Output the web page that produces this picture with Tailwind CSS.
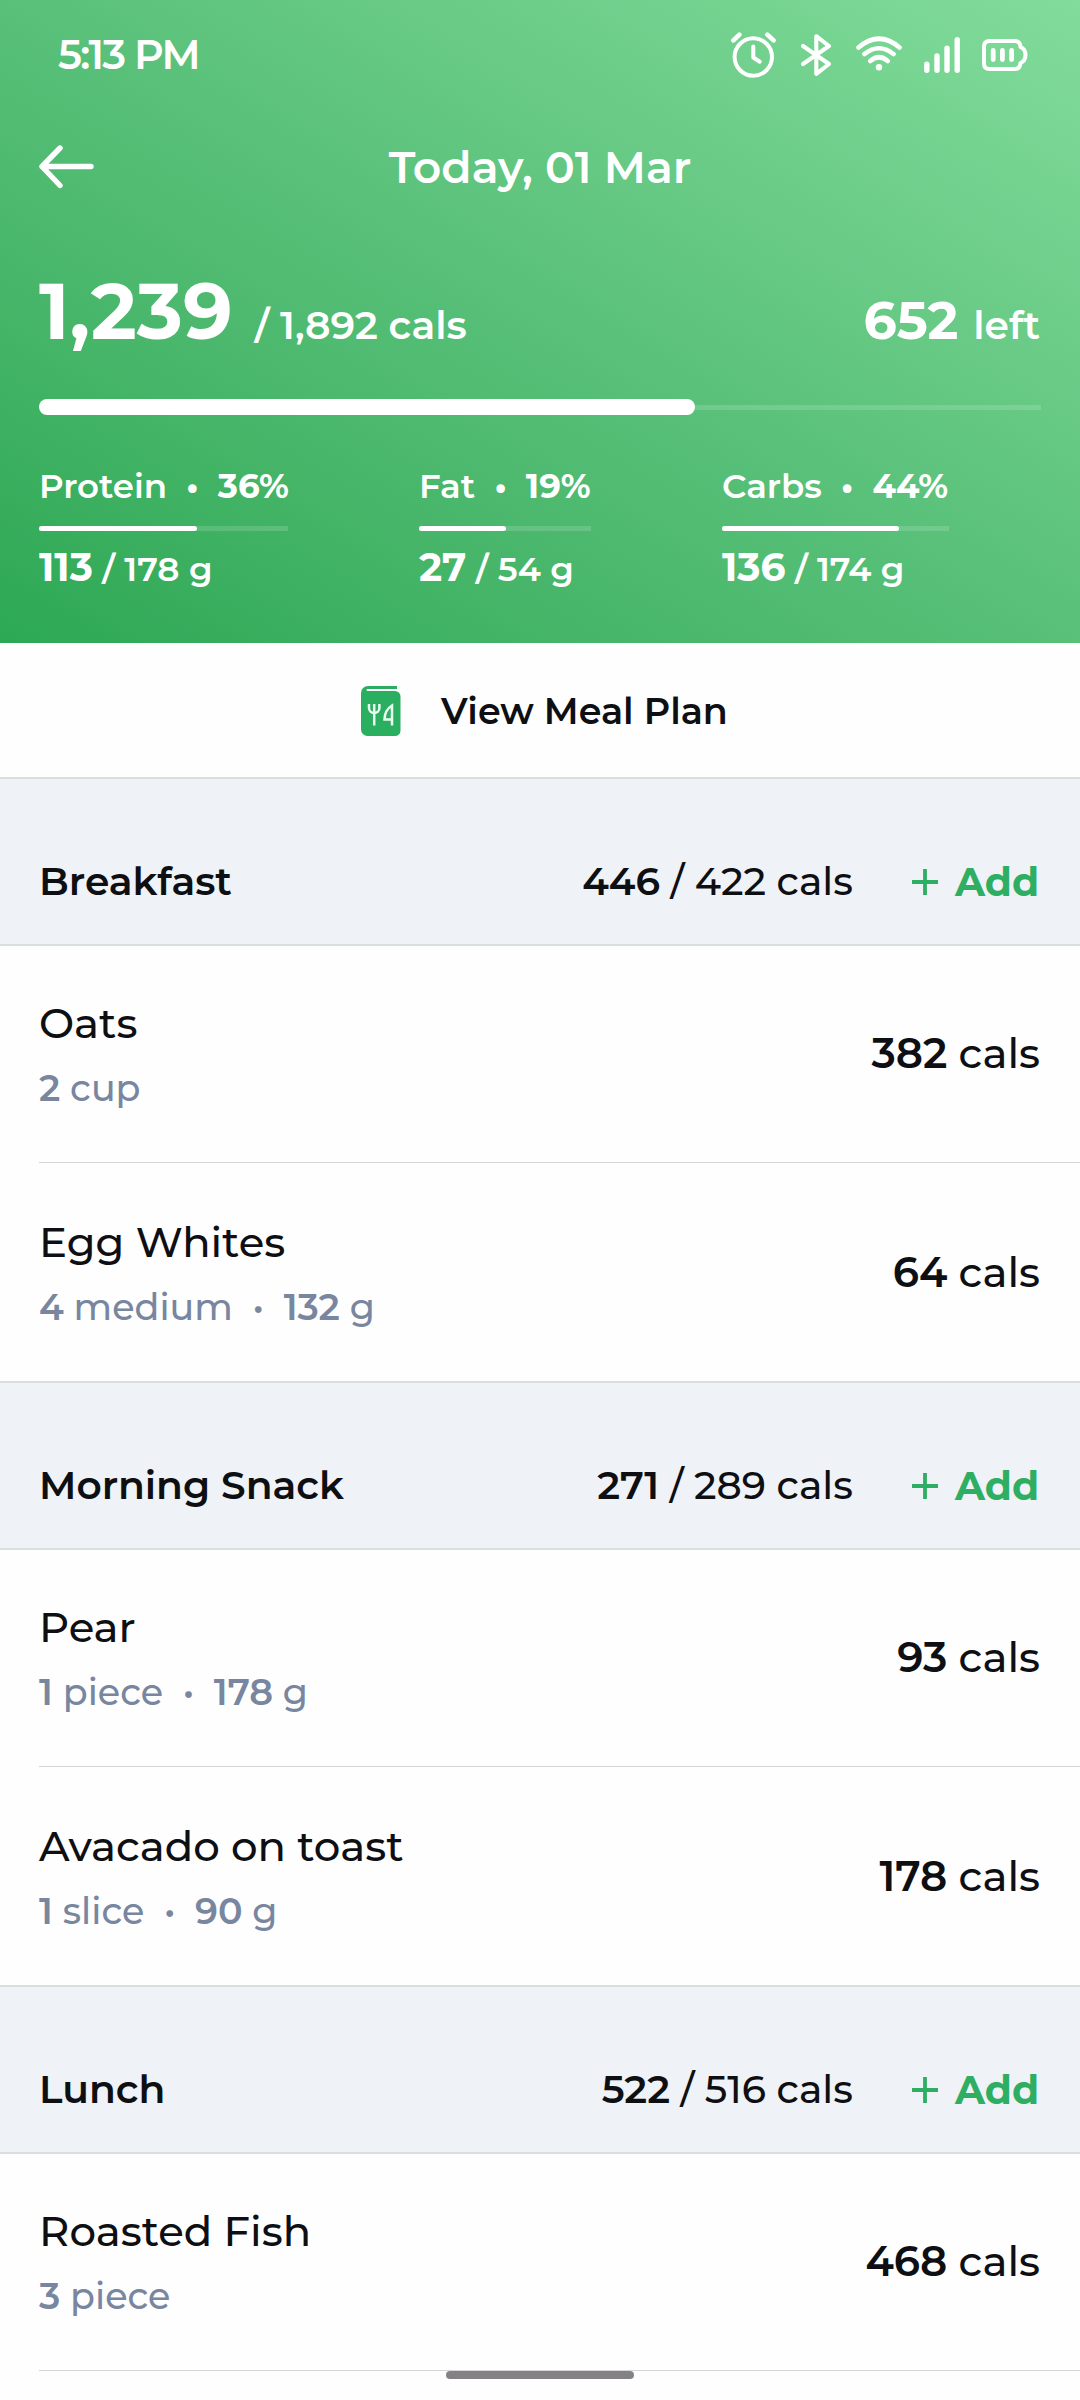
<!DOCTYPE html>
<html lang="en">
<head>
  <meta charset="UTF-8">
  <meta name="viewport" content="width=device-width, initial-scale=1.0">
  <title>Calorie Tracker - Today</title>
  <script src="https://cdn.jsdelivr.net/npm/@tailwindcss/browser@4"></script>
</head>
<body class="relative w-[1080px] h-[2400px] overflow-hidden bg-[#fefefe] font-['Montserrat','Inter',sans-serif] text-[#0e0f12]">

  <!-- Header with gradient -->
  <header class="h-[643px] bg-linear-to-tr from-[#2ca854] via-[#58c079] to-[#82dc9b] text-white">

    <!-- Status bar -->
    <div class="flex h-[109px] items-center justify-between pl-[58px] pr-[52px]">
      <span class="text-[41px] leading-none font-semibold tracking-[-1.75px]">5:13 PM</span>
      <div class="flex items-center">
        <!-- Alarm -->
        <svg class="w-[45px] h-[46px]" viewBox="0 0 45 46" fill="none" stroke="currentColor" stroke-width="4" stroke-linecap="round" stroke-linejoin="round">
          <circle cx="22.3" cy="25" r="18.7"/>
          <path d="M22.3 14.5v11l6.5 4.2"/>
          <path d="M2.4 8.4 8.4 2.6M36.4 2.6l6.2 5.8" stroke-width="4.6"/>
        </svg>
        <!-- Bluetooth -->
        <svg class="ml-[25px] w-[30px] h-[42px]" viewBox="0 0 30 42" fill="none" stroke="currentColor" stroke-width="4.1" stroke-linecap="round" stroke-linejoin="round">
          <path d="M2 12l26 18-12.7 9.8V2.2L28 12 2 30"/>
        </svg>
        <!-- Wifi -->
        <svg class="ml-[25px] w-[46px] h-[37px]" viewBox="0 0 46 37" fill="none" stroke="currentColor" stroke-width="4.6" stroke-linecap="round">
          <path d="M2.5 11.5Q23-6 43.5 11.5M8.5 18Q23 6.5 37.5 18M14.3 25Q23 17.5 31.7 25"/>
          <circle cx="23" cy="31.3" r="3.2" fill="currentColor" stroke="none"/>
        </svg>
        <!-- Signal -->
        <svg class="ml-[22px] w-[36px] h-[36px]" viewBox="0 0 36 36" fill="none" stroke="currentColor" stroke-width="5.4" stroke-linecap="round">
          <path d="M2.8 27.2v6M13 19v14.2M23 11.3v21.9M33.2 2.8v30.4"/>
        </svg>
        <!-- Battery -->
        <svg class="ml-[22px] w-[46px] h-[32px]" viewBox="0 0 46 32" fill="none" stroke="currentColor" stroke-linecap="round" stroke-linejoin="round">
          <path d="M7.5 2H33q5 0 5.500 6 5 2 5 8t-5 8q-.5 6-5.5 6H7.5Q2 30 2 24.5v-17Q2 2 7.5 2Z" stroke-width="4"/>
          <path d="M11.2 11.500v9M20.4 11.500v9M29.6 11.500v9" stroke-width="4.8"/>
        </svg>
      </div>
    </div>

    <!-- Title bar -->
    <div class="flex h-[116px] items-center justify-between px-[39px]">
      <svg class="w-[55px] h-[44px]" viewBox="0 0 55 44" fill="none" stroke="currentColor" stroke-width="5.4" stroke-linecap="round" stroke-linejoin="round">
        <path d="M52 21.5H3M21 3 3 21.5l18 19"/>
      </svg>
      <h1 class="text-[44.2px] leading-[54px] font-semibold">Today, 01 Mar</h1>
      <span class="w-[55px]"></span>
    </div>

    <!-- Calories -->
    <div class="flex h-[134px] items-baseline justify-between pl-[39px] pr-[40px] pt-[38px] font-semibold">
      <div class="flex items-baseline">
        <span class="text-[78px] leading-[96px] font-bold">1,239</span>
        <span class="ml-[22px] text-[39.2px]">/ 1,892 cals</span>
      </div>
      <div class="flex items-baseline">
        <span class="text-[52.2px] font-bold">652</span>
        <span class="ml-[15px] text-[39.2px]">left</span>
      </div>
    </div>
    <div class="mx-[39px] mt-[40px] flex h-[16px] items-center">
      <div class="h-[16px] rounded-full bg-white" style="width: 65.5%"></div>
      <div class="h-[5px] flex-1 bg-white/15"></div>
    </div>

    <!-- Macros -->
    <div class="mt-[50px] flex gap-[131px] px-[39px] text-[34px] leading-[42px] font-semibold">
      <div class="w-[249px]">
        <p class="whitespace-nowrap">Protein<b class="font-bold">&nbsp; •&nbsp; 36%</b></p>
        <div class="mt-[19px] h-[5px] bg-white/15">
          <div class="h-full rounded-full bg-white" style="width: 63.5%"></div>
        </div>
        <p class="mt-[12px] leading-[48px] whitespace-nowrap"><b class="text-[39.2px] font-bold">113</b> / 178 g</p>
      </div>
      <div class="w-[172px]">
        <p class="whitespace-nowrap">Fat<b class="font-bold">&nbsp; •&nbsp; 19%</b></p>
        <div class="mt-[19px] h-[5px] bg-white/15">
          <div class="h-full rounded-full bg-white" style="width: 50.5%"></div>
        </div>
        <p class="mt-[12px] leading-[48px] whitespace-nowrap"><b class="text-[39.2px] font-bold">27</b> / 54 g</p>
      </div>
      <div class="w-[227px]">
        <p class="whitespace-nowrap">Carbs<b class="font-bold">&nbsp; •&nbsp; 44%</b></p>
        <div class="mt-[19px] h-[5px] bg-white/15">
          <div class="h-full rounded-full bg-white" style="width: 78%"></div>
        </div>
        <p class="mt-[12px] leading-[48px] whitespace-nowrap"><b class="text-[39.2px] font-bold">136</b> / 174 g</p>
      </div>
    </div>
  </header>

  <!-- Meal plan link -->
  <a class="flex h-[134px] items-center justify-center gap-[40px] pl-[9px] pt-[2px]">
    <svg class="w-[40px] h-[50px]" viewBox="0 0 40 50">
      <path d="M7 0h29v3H6.5a1 1 0 0 0 0 2H34a5.5 5.5 0 0 1 5.5 5.5v34A5.5 5.5 0 0 1 34 50H6.5A6.5 6.500 0 0 1 0 43.5V7a7 7 0 0 1 7-7Z" fill="#2aae60"/>
      <path d="M8 18v4a5.2 5 0 0 0 10.4 0v-4M13.2 18v21.5M31 39.5v-20q-7.300 4.500-7.500 14H31" fill="none" stroke="#e9fff0" stroke-width="2.5"/>
    </svg>
    <span class="text-[36.5px] leading-[44px] font-semibold">View Meal Plan</span>
  </a>

  <!-- Breakfast -->
  <section>
    <div class="flex h-[169px] items-center border-y-2 border-[#d9dfe1] bg-[#eff2f6] pl-[39px] pr-[41px] pt-[39px] text-[39.2px] leading-[48px] font-medium">
      <h2 class="flex-1 font-semibold">Breakfast</h2>
      <p><b class="font-semibold">446</b> / 422 cals</p>
      <div class="ml-[59px] mt-[2px] flex items-center gap-[17px] font-bold text-[#2eae63]">
        <svg class="w-[26px] h-[26px]" viewBox="0 0 26 26" stroke="currentColor" stroke-width="3.8"><path d="M0 13h26M13 0v26"/></svg>
        Add
      </div>
    </div>
    <div class="ml-[39px] flex h-[217px] items-start justify-between border-b border-[#d3d5d8] pr-[40px] pt-[51px]">
      <div>
        <h3 class="text-[41.8px] leading-[52px] font-medium">Oats</h3>
        <p class="mt-[17px] text-[36.5px] leading-[44px] font-medium text-[#7886a0]"><b class="font-semibold">2</b> cup</p>
      </div>
      <p class="mt-[30px] text-[41.8px] leading-[52px] font-medium"><b class="font-semibold">382</b> cals</p>
    </div>
    <div class="ml-[39px] flex h-[218px] items-start justify-between pr-[40px] pt-[53px]">
      <div>
        <h3 class="text-[41.8px] leading-[52px] font-medium">Egg Whites</h3>
        <p class="mt-[17px] text-[36.5px] leading-[44px] font-medium text-[#7886a0]"><b class="font-semibold">4</b> medium&nbsp; •&nbsp; <b class="font-semibold">132</b> g</p>
      </div>
      <p class="mt-[30px] text-[41.8px] leading-[52px] font-medium"><b class="font-semibold">64</b> cals</p>
    </div>
  </section>

  <!-- Morning Snack -->
  <section>
    <div class="flex h-[169px] items-center border-y-2 border-[#d9dfe1] bg-[#eff2f6] pl-[39px] pr-[41px] pt-[39px] text-[39.2px] leading-[48px] font-medium">
      <h2 class="flex-1 font-semibold">Morning Snack</h2>
      <p><b class="font-semibold">271</b> / 289 cals</p>
      <div class="ml-[59px] mt-[2px] flex items-center gap-[17px] font-bold text-[#2eae63]">
        <svg class="w-[26px] h-[26px]" viewBox="0 0 26 26" stroke="currentColor" stroke-width="3.8"><path d="M0 13h26M13 0v26"/></svg>
        Add
      </div>
    </div>
    <div class="ml-[39px] flex h-[217px] items-start justify-between border-b border-[#d3d5d8] pr-[40px] pt-[51px]">
      <div>
        <h3 class="text-[41.8px] leading-[52px] font-medium">Pear</h3>
        <p class="mt-[17px] text-[36.5px] leading-[44px] font-medium text-[#7886a0]"><b class="font-semibold">1</b> piece&nbsp; •&nbsp; <b class="font-semibold">178</b> g</p>
      </div>
      <p class="mt-[30px] text-[41.8px] leading-[52px] font-medium"><b class="font-semibold">93</b> cals</p>
    </div>
    <div class="ml-[39px] flex h-[218px] items-start justify-between pr-[40px] pt-[53px]">
      <div>
        <h3 class="text-[41.8px] leading-[52px] font-medium">Avacado on toast</h3>
        <p class="mt-[17px] text-[36.5px] leading-[44px] font-medium text-[#7886a0]"><b class="font-semibold">1</b> slice&nbsp; •&nbsp; <b class="font-semibold">90</b> g</p>
      </div>
      <p class="mt-[30px] text-[41.8px] leading-[52px] font-medium"><b class="font-semibold">178</b> cals</p>
    </div>
  </section>

  <!-- Lunch -->
  <section>
    <div class="flex h-[169px] items-center border-y-2 border-[#d9dfe1] bg-[#eff2f6] pl-[39px] pr-[41px] pt-[39px] text-[39.2px] leading-[48px] font-medium">
      <h2 class="flex-1 font-semibold">Lunch</h2>
      <p><b class="font-semibold">522</b> / 516 cals</p>
      <div class="ml-[59px] mt-[2px] flex items-center gap-[17px] font-bold text-[#2eae63]">
        <svg class="w-[26px] h-[26px]" viewBox="0 0 26 26" stroke="currentColor" stroke-width="3.8"><path d="M0 13h26M13 0v26"/></svg>
        Add
      </div>
    </div>
    <div class="ml-[39px] flex h-[217px] items-start justify-between border-b border-[#d3d5d8] pr-[40px] pt-[51px]">
      <div>
        <h3 class="text-[41.8px] leading-[52px] font-medium">Roasted Fish</h3>
        <p class="mt-[17px] text-[36.5px] leading-[44px] font-medium text-[#7886a0]"><b class="font-semibold">3</b> piece</p>
      </div>
      <p class="mt-[30px] text-[41.8px] leading-[52px] font-medium"><b class="font-semibold">468</b> cals</p>
    </div>
  </section>

  <!-- Home indicator -->
  <div class="absolute bottom-[21px] left-[446px] h-[8px] w-[188px] rounded-full bg-[#858286]"></div>
</body>
</html>
